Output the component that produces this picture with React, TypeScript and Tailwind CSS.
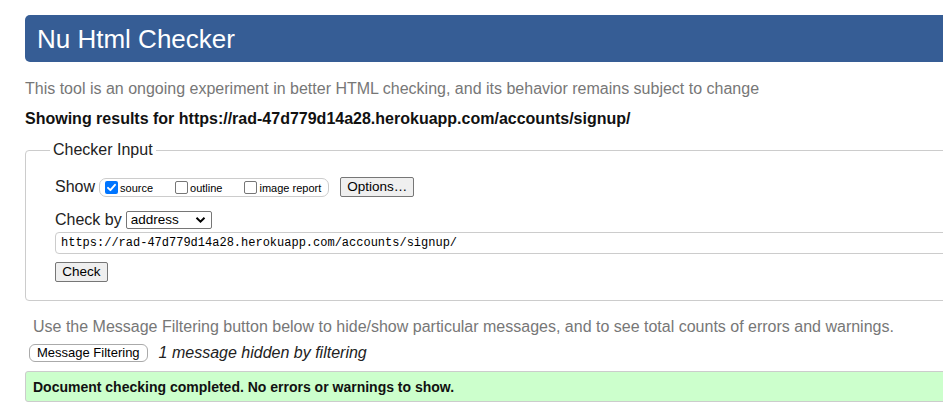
import React from 'react';

function Box({ checked, label }: { checked?: boolean; label: string }) {
  return (
    <span className="flex items-center whitespace-nowrap">
      {checked ? (
        <span className="w-[13px] h-[13px] rounded-[2px] bg-[#0075ff] flex items-center justify-center">
          <svg width="11" height="11" viewBox="0 0 11 11">
            <path d="M2 5.8 L4.4 8.2 L9 2.8" fill="none" stroke="white" strokeWidth="1.9" strokeLinecap="round" strokeLinejoin="round" />
          </svg>
        </span>
      ) : (
        <span className="w-[13px] h-[13px] rounded-[2px] border border-[#767676] bg-white" />
      )}
      <span className="ml-[2px] mt-[2px] text-[11px] leading-[13px] text-black">{label}</span>
    </span>
  );
}

export default function App() {
  return (
    <div className="w-screen min-h-screen overflow-hidden bg-white font-['Liberation_Sans',Arial,sans-serif] text-black">
      <div className="w-[1200px] pl-[25px] pt-[15px]">
        {/* header */}
        <div className="h-[47px] bg-[#365d95] rounded-[5px] pl-[12px] flex items-center">
          <h1 className="text-[26px] leading-[30px] text-white font-normal">Nu Html Checker</h1>
        </div>

        <p className="mt-[17px] text-[16px] leading-[20px] text-[#777]">
          This tool is an ongoing experiment in better HTML checking, and its behavior remains subject to change
        </p>
        <p className="mt-[10px] text-[16px] leading-[20px] font-bold text-[#111]">
          Showing results for https://rad-47d779d14a28.herokuapp.com/accounts/signup/
        </p>

        {/* checker input */}
        <fieldset className="mt-[11px] border border-[#ccc] rounded-[4px] pb-[17px]">
          <legend className="ml-[24px] px-[3px] text-[16px] leading-[20px] text-[#222]">Checker Input</legend>

          <div className="pl-[29px]">
            <div className="mt-[17px] flex items-center h-[20px]">
              <span className="text-[16px] leading-[20px] text-[#222]">Show</span>
              <div className="ml-[4px] h-[19px] border border-[#ccc] rounded-[7px] flex items-center pl-[5px] pr-[7px]">
                <Box checked label="source" />
                <span className="ml-[22px]"><Box label="outline" /></span>
                <span className="ml-[22px]"><Box label="image report" /></span>
              </div>
              <button className="ml-[11px] h-[20px] px-[6px] border border-[#767676] rounded-[2px] bg-[#efefef] text-[13.5px] leading-[18px] text-black">
                Options…
              </button>
            </div>

            <div className="mt-[14px] flex items-center h-[18px]">
              <span className="text-[16px] leading-[20px] text-[#222]">Check by</span>
              <div className="ml-[4px] h-[18px] w-[86px] border border-[#767676] rounded-[2px] bg-white flex items-center pl-[4px] pr-[5px]">
                <span className="text-[13.5px] leading-[16px] text-black flex-1">address</span>
                <svg width="11" height="8" viewBox="0 0 11 8">
                  <path d="M1.5 1.8 L5.5 5.6 L9.5 1.8" fill="none" stroke="black" strokeWidth="2" />
                </svg>
              </div>
            </div>

            <div className="mt-[3px] h-[22px] w-[1100px] border border-[#ccc] rounded-[4px] bg-white flex items-center pl-[5px]">
              <span className="font-['Liberation_Mono',monospace] text-[12px] leading-[14px] text-black">
                https://rad-47d779d14a28.herokuapp.com/accounts/signup/
              </span>
            </div>

            <button className="mt-[8px] h-[20px] w-[53px] border border-[#767676] rounded-[2px] bg-[#efefef] text-[13.5px] leading-[18px] text-black">
              Check
            </button>
          </div>
        </fieldset>

        <p className="mt-[16px] pl-[8px] text-[16px] leading-[20px] text-[#777]">
          Use the Message Filtering button below to hide/show particular messages, and to see total counts of errors and warnings.
        </p>

        <div className="mt-[6px] flex items-center">
          <button className="ml-[4px] h-[18px] px-[7px] border border-[#aaa] rounded-[6px] bg-white text-[13px] leading-[16px] text-black">
            Message Filtering
          </button>
          <span className="ml-[11px] italic text-[16px] leading-[20px] text-[#222]">1 message hidden by filtering</span>
        </div>

        <div className="mt-[8px] h-[31px] border border-[#ccc] rounded-[3px] bg-[#ccffcc] flex items-center pl-[7px]">
          <span className="font-bold text-[14px] leading-[18px] text-[#111]">
            Document checking completed. No errors or warnings to show.
          </span>
        </div>
      </div>
    </div>
  );
}
